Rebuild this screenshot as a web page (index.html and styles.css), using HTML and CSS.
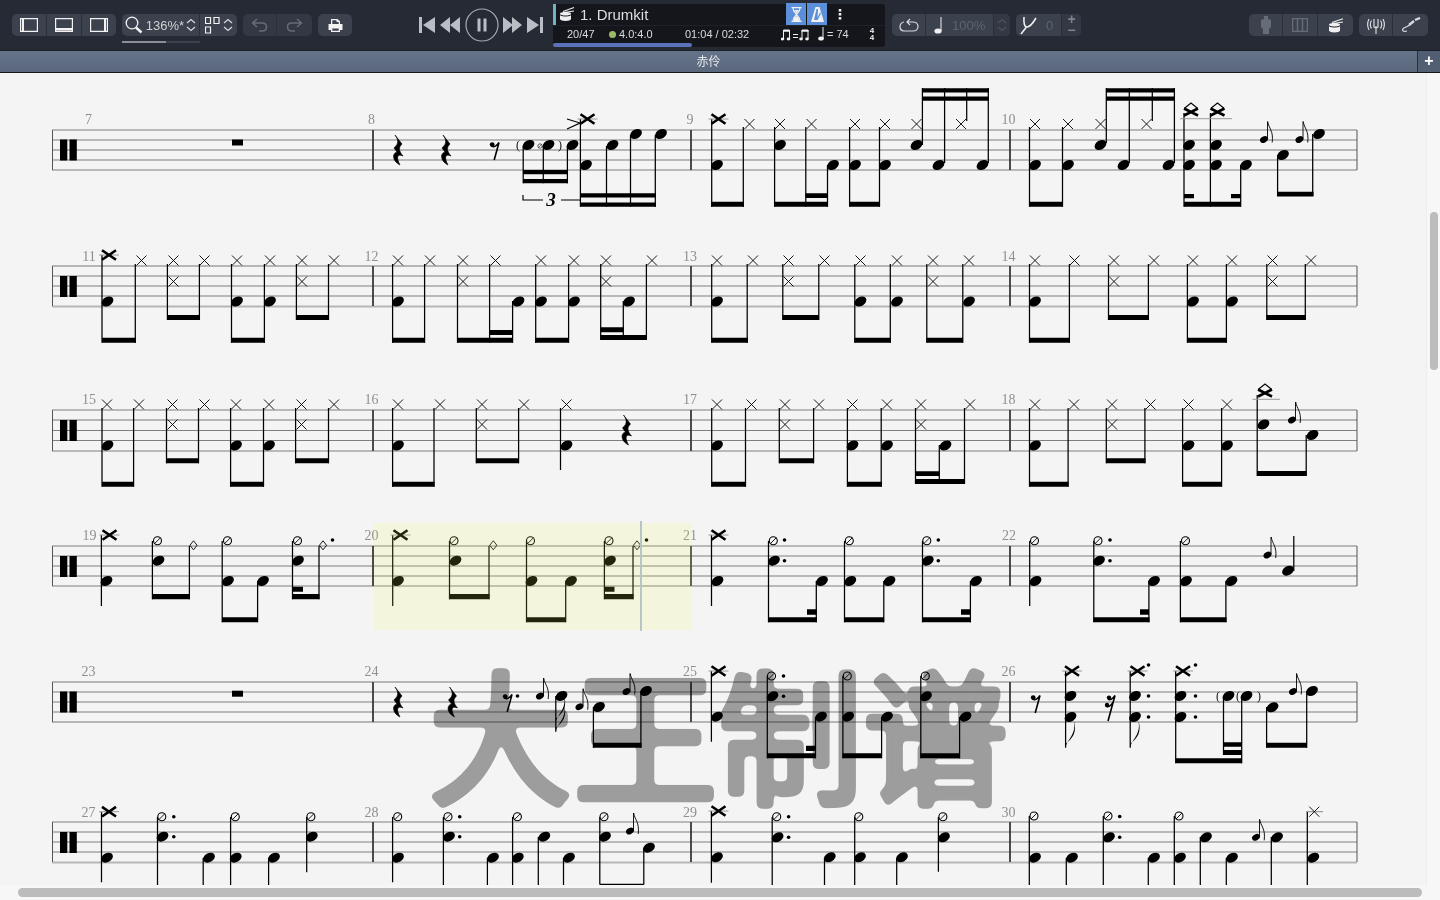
FILE: index.html
```html
<!DOCTYPE html>
<html lang="zh">
<head>
<meta charset="utf-8">
<title>Drumkit</title>
<link rel="stylesheet" href="styles.css">
</head>
<body>
<svg class="defs" width="0" height="0" aria-hidden="true">
  <defs>
    <ellipse id="n" rx="6.300" ry="4.500" transform="rotate(-30)"/>
    <path id="x" class="thin" d="M-5-5L5 5M5-5L-5 5"/>
    <g id="X"><path class="ledger" d="M-10 0H10"/><path class="bold" d="M-7-4.800L7 4.800M7-4.800L-7 4.800"/></g>
    <g id="XD"><path class="bold" d="M-7-3.500L7 3.500M7-3.500L-7 3.500"/><path class="thin thick" d="M-6.500-3.800L0-9L6.500-3.800"/></g>
    <g id="o"><circle class="thin thick" r="4"/><path class="thin" d="M-3 3L3-3"/></g>
    <path id="d" class="thin" d="M0-4.500L3.600 0L0 4.500L-3.600 0Z"/>
    <circle id="t" r="1.800"/>
    <g id="g"><ellipse rx="4.200" ry="3" transform="rotate(-28)"/><path class="thin" d="M3.500-1V-18"/><path class="thin" d="M3.700-18C4.700-11 9.700-9 8.200 3"/></g>
    <path id="r" class="fat" d="M-3-15L4-6C1-3 0 0 5 6C1 4-3 5 2 15C-6 11-6 3-1 2L-4-2C-1-5 2-8-3-15Z"/>
    <g id="e"><circle cx="-2.800" cy="-6.400" r="2.400"/><path class="rest" d="M-3.500-5C-1-3.500 2-5 4-8.500L-.8 9"/></g>
    <g id="ee"><circle cx="-1" cy="-9.400" r="2.200"/><circle cx="-3" cy="-2" r="2.200"/><path class="rest" d="M-2-8C0-6.500 3-8 5-11.500L-2 14M-4-.8C-2 .5 1-1 3-4.500"/></g>
    <path id="f" d="M0 0C1.500-9 11.500-13 8-28C12-16 7-9 0-4Z"/>
    <g id="clef"><rect x="60" width="7.300" height="21"/><rect x="69.500" width="7.300" height="21"/></g>
    <filter id="rnd" x="-5%" y="-5%" width="110%" height="110%"><feGaussianBlur stdDeviation="2.600"/><feComponentTransfer><feFuncA type="linear" slope="7" intercept="-2.700"/></feComponentTransfer></filter>
  </defs>
</svg>

<header class="toolbar">
  <div class="group g-view">
    <button class="seg w35"><svg class="ico" width="18" height="14" viewBox="0 0 18 14"><path d="M.6.6h16.800v12.800H.6z"/><path class="solid" d="M2 1h2v12H2z"/></svg></button>
    <button class="seg w35"><svg class="ico" width="18" height="14" viewBox="0 0 18 14"><path d="M.6.6h16.800v12.800H.6z"/><path class="solid" d="M1 10h16v2.500H1z"/></svg></button>
    <button class="seg w34 last"><svg class="ico" width="18" height="14" viewBox="0 0 18 14"><path d="M.6.6h16.800v12.800H.6z"/><path class="solid" d="M14 1h2v12h-2z"/></svg></button>
  </div>
  <div class="group g-zoom">
    <button class="seg zoom-seg">
      <svg class="ico thicker" width="18" height="18" viewBox="0 0 18 18"><circle cx="7" cy="7" r="5.800"/><path class="solidline" d="M11 11.500L16.500 16.500"/></svg>
      <span class="zoom-val">136%*</span>
      <svg class="chev" width="10" height="14" viewBox="0 0 10 14"><path d="M1 5L5 1.500L9 5M1 9L5 12.500L9 9"/></svg>
    </button>
    <button class="seg grid-seg last">
      <svg class="ico" width="15" height="17" viewBox="0 0 15 17"><path d="M.5 .5h5v6h-5zM9 .5h5v6H9zM.5 10h5v6h-5z"/></svg>
      <svg class="chev" width="10" height="14" viewBox="0 0 10 14"><path d="M1 5L5 1.500L9 5M1 9L5 12.500L9 9"/></svg>
    </button>
    <div class="zoom-slider"><span class="zoom-fill"></span></div>
  </div>
  <div class="group g-undo dim">
    <button class="seg w34"><svg class="ico-dim" width="17" height="14" viewBox="0 0 17 14"><path d="M6 1L1.500 5L6 9M2 5H11C14 5 15.500 7 15.500 9C15.500 11 14 13 11 13H8"/></svg></button>
    <button class="seg w35 last"><svg class="ico-dim" width="17" height="14" viewBox="0 0 17 14"><path d="M11 1L15.500 5L11 9M15 5H6C3 5 1.500 7 1.500 9C1.500 11 3 13 6 13H9"/></svg></button>
  </div>
  <div class="group g-print">
    <button class="seg w34 last"><svg width="15" height="15" viewBox="0 0 15 15" class="print"><path d="M3 6V1h6.500L12 3.300V6h2.500v6H12v2H3v-2H.5V6zM4.300 2.300V6h6.400V4H8.500V2.300zM4.300 10.500v2.300h6.400v-2.300z" fill-rule="evenodd"/></svg></button>
  </div>

  <div class="transport">
    <svg class="tp" width="16" height="16" viewBox="0 0 16 16"><path d="M0 0h3v16H0zM16 0v16L4 8z"/></svg>
    <svg class="tp" width="20" height="16" viewBox="0 0 20 16"><path d="M10 0v16L0 8zM20 0v16L10 8z"/></svg>
    <svg class="tp-circle" width="34" height="34" viewBox="0 0 34 34"><circle cx="17" cy="17" r="16"/><path class="tp-bar" d="M12.500 10.500h3v13h-3zM18.500 10.500h3v13h-3z"/></svg>
    <svg class="tp" width="19" height="16" viewBox="0 0 19 16"><path d="M0 0v16L10 8zM9 0v16L19 8z"/></svg>
    <svg class="tp" width="16" height="16" viewBox="0 0 16 16"><path d="M0 0v16L12 8zM13 0h3v16h-3z"/></svg>
  </div>

  <div class="panel">
    <div class="panel-top">
      <svg class="drum" width="16" height="16" viewBox="0 0 16 16"><path d="M1 7.500c0-2 11-2 11 0v5.500c0 2.500-11 2.500-11 0z"/><path class="gap" d="M1 8.500c1 2 10 2 11 0"/><path class="stick" d="M4 5.500L15 1.500M5 6.500L15 5"/></svg>
      <span class="track-name">1. Drumkit</span>
      <button class="blue-btn first"><svg width="11" height="15" viewBox="0 0 11 15" class="white-line-ico"><path d="M.5.7h10M.5 14.300h10M2 1C2 5 5 6 5.500 7.500C5 9 2 10 2 14M9 1C9 5 6 6 5.500 7.500C6 9 9 10 9 14"/><path class="fillin" d="M3 11.500L5.500 9L8 11.500V14H3zM3.300 3H7.700L5.500 6z"/></svg></button>
      <button class="blue-btn"><svg width="13" height="15" viewBox="0 0 13 15" class="white-ico"><path d="M4.500 0h4L13 15H0zM5.500 2L3 13h3.500L9.800 7 9.300 5 6.500 10.500 7 2z" fill-rule="evenodd"/></svg></button>
      <span class="kebab">⋮</span>
    </div>
    <div class="panel-bottom">
      <span class="p-bars">20/47</span>
      <span class="p-dot"></span>
      <span class="p-sig">4.0:4.0</span>
      <span class="p-time">01:04 / 02:32</span>
      <svg class="p-swing" width="30" height="13" viewBox="0 0 30 13"><path d="M2.500 11V2h6v9M21 11V2h6v9" class="wht-line"/><path d="M2 2h7v1.800H2zM20.500 2h7v1.800h-7z" class="white-ico"/><ellipse cx="1.500" cy="11" rx="1.800" ry="1.400" class="white-ico"/><ellipse cx="7.500" cy="11" rx="1.800" ry="1.400" class="white-ico"/><ellipse cx="20" cy="11" rx="1.800" ry="1.400" class="white-ico"/><ellipse cx="26" cy="11" rx="1.800" ry="1.400" class="white-ico"/><path d="M12 6h5v1h-5zM12 9h5v1h-5z" class="white-ico"/></svg>
      <svg class="p-note" width="7" height="14" viewBox="0 0 7 14"><path d="M5 12V0" class="wht-line"/><ellipse cx="3" cy="11.500" rx="2.800" ry="2" class="white-ico"/></svg>
      <span class="p-tempo">= 74</span>
      <span class="p-clef"><span>4</span><span>4</span></span>
    </div>
    <div class="progress"></div>
  </div>

  <div class="group g-loop">
    <button class="seg w34"><svg class="ico-soft" width="20" height="14" viewBox="0 0 20 14"><path d="M11 1L8 4L11 7M8.500 4H14C17 4 19 6 19 8.500S17 13 14 13H5C2.500 13 1 11 1 8.500S3 4 5 4"/></svg></button>
    <button class="seg speed-seg"><svg width="9" height="17" viewBox="0 0 9 17"><path d="M7 14V0" class="wht-line"/><ellipse cx="4" cy="14" rx="3.600" ry="2.600" class="white-ico"/></svg><span class="dim-val">100%</span></button>
    <button class="seg w16 last darker"><svg class="chev faint" width="10" height="14" viewBox="0 0 10 14"><path d="M1 5L5 1.500L9 5M1 9L5 12.500L9 9"/></svg></button>
  </div>
  <div class="group g-tune">
    <button class="seg tune-seg"><svg class="ico-soft fork" width="17" height="20" viewBox="0 0 17 20"><path d="M1 19L6.500 12"/><path d="M4 2C3.500 8 4.500 12 7 12C10 12 13 8 16 3"/></svg><span class="dim-val zero">0</span></button>
    <button class="seg w19 last pm">+<br>−</button>
  </div>
  <div class="group g-inst">
    <button class="seg w34"><svg class="ico-dim-solid" width="10" height="18" viewBox="0 0 10 18"><path d="M3 0h4v3l3 1v7l-2 2v5H2v-5L0 11V4l3-1z"/></svg></button>
    <button class="seg w35"><svg class="ico-dim" width="16" height="14" viewBox="0 0 16 14"><path d="M.5.5h15v13H.5zM5.500.5v13M10.500.5v13"/></svg></button>
    <button class="seg w35 last"><svg width="16" height="15" viewBox="0 0 16 15" class="white-ico"><path d="M1 6.500c0-2 11-2 11 0v6c0 2.500-11 2.500-11 0z"/><path class="gap" d="M1 7.500c1 2 10 2 11 0"/><path class="stick" d="M4 4.500L15 .8M5 5.500L15 4"/></svg></button>
  </div>
  <div class="group g-io">
    <button class="seg w34"><svg class="ico-soft thin-soft" width="20" height="18" viewBox="0 0 20 18"><path d="M3 3C1 7 1 10 3 14M5.500 4.500C4 7 4 10 5.500 12.500M17 3C19 7 19 10 17 14M14.500 4.500C16 7 16 10 14.500 12.500M8 3V11C8 12 12 12 12 11V3"/><path d="M10 10V18"/></svg></button>
    <button class="seg w35 last"><svg class="ico-soft thin-soft" width="20" height="16" viewBox="0 0 20 16"><path d="M9 8L3 11C0 13 2 15 6 14"/><path class="stick-thick" d="M8 8L13 4M14 3L19 1"/></svg></button>
  </div>
</header>

<div class="titlebar">
  <div class="title">赤伶</div>
  <div class="add">+</div>
</div>

<div class="main">
  <main class="score">
    <svg class="system s1" viewBox="0 80 1426 136">
      <path class="line" d="M52 130H1357M52 140H1357M52 160H1357M52 170H1357"/><path class="line soft" d="M52 150H1357"/>
      <path class="frame" d="M52.500 130V170M1357 130V170"/><path class="bar" d="M373 130V170M691 130V170M1010 130V170"/>
      <use href="#clef" y="139.500"/>
      <text class="num" x="88.500" y="124">7</text><text class="num" x="371.500" y="124">8</text><text class="num" x="690" y="124">9</text><text class="num" x="1008.500" y="124">10</text>
      <path d="M232 139.500H243V145.500H232Z"/>
      <use href="#r" x="398" y="150"/><use href="#r" x="446" y="150"/><use href="#e" x="495" y="151"/>
      <text class="par" x="516" y="149">(</text><text class="par" x="558" y="149">)</text><use href="#o" transform="translate(540 146) scale(.55)"/>
      <path class="stem" d="M523.200 146V183.300M543.300 146V183.300M567.400 146V183.300M580.400 119V206.700M606.500 146V206.700M630.500 135V206.700M655.300 135V206.700M711.700 119V206.700M743.300 127V206.700M774.600 127V206.700M805.800 127V206.700M827.500 165V206.700M849.600 127V206.700M879.500 127V206.700M922.400 88V145M944.600 88V163M966.700 88V121M988.300 88V163M1029.500 127V206.700M1062.500 127V206.700M1106.300 88V143M1129.300 88V163M1152.300 88V121M1174.400 88V163M1184 113V206.700M1210.400 113V206.700M1240.700 165V206.700M1277.600 155V196M1312.700 134V196"/>
      <path d="M523 170H568V174.300H523ZM523 179H568V183.300H523ZM580 193.300H656V197.500H580ZM580 202.500H656V206.700H580ZM711 201.700H744V206.700H711ZM774 201.700H828V206.700H774ZM805.500 193.300H828V198H805.500ZM849 201.700H880V206.700H849ZM922 88.300H989V92.500H922ZM922 96.500H989V100.700H922ZM1029 201.700H1063V206.700H1029ZM1106 88.300H1175V92.500H1106ZM1106 96.500H1175V100.700H1106ZM1184 201.700H1241V206.700H1184ZM1184 194H1194V198.300H1184ZM1231 194H1241V198.300H1231ZM1277 191.700H1313.500V196.500H1277Z"/>
      <path class="brk" d="M523 195V200H543M561 200H580"/><text class="tup" x="551" y="206">3</text>
      <path class="brk" d="M567 119L580 123L567 129"/>
      <use href="#n" x="528.500" y="145"/><use href="#n" x="548.500" y="145"/><use href="#n" x="572.500" y="145"/><use href="#n" x="586" y="165"/><use href="#n" x="612.500" y="145"/><use href="#n" x="636" y="134"/><use href="#n" x="661" y="134"/>
      <use href="#X" x="587.500" y="119"/>
      <use href="#X" x="718.500" y="119"/><use href="#n" x="717" y="165"/><use href="#x" x="749.500" y="124"/><use href="#x" x="780" y="124"/><use href="#n" x="780" y="145"/><use href="#x" x="811.500" y="124"/><use href="#n" x="833" y="165"/><use href="#x" x="855" y="124"/><use href="#n" x="855" y="165"/><use href="#x" x="885" y="124"/><use href="#n" x="885" y="165"/><use href="#x" x="916.500" y="124"/><use href="#n" x="916.500" y="145"/><use href="#n" x="938.500" y="165"/><use href="#x" x="961" y="124"/><use href="#n" x="982.500" y="165"/>
      <use href="#x" x="1035" y="124"/><use href="#n" x="1035" y="165"/><use href="#x" x="1068" y="124"/><use href="#n" x="1068" y="165"/><use href="#x" x="1100.500" y="124"/><use href="#n" x="1100.500" y="145"/><use href="#n" x="1123.500" y="165"/><use href="#x" x="1146.500" y="124"/><use href="#n" x="1168.500" y="165"/>
      <path class="ledger" d="M1180 118.700H1232"/><use href="#XD" x="1191" y="112"/><use href="#XD" x="1217.500" y="112"/>
      <use href="#n" x="1189" y="145"/><use href="#n" x="1216" y="145"/><use href="#n" x="1189" y="165"/><use href="#n" x="1216" y="165"/><use href="#n" x="1246" y="165"/>
      <use href="#g" x="1264" y="139.500"/><use href="#g" x="1299.500" y="139.500"/><use href="#n" x="1283" y="155"/><use href="#n" x="1319" y="134"/>
    </svg>

    <svg class="system s2" viewBox="0 216 1426 144">
      <path class="line" d="M52 276H1357M52 286H1357M52 296H1357"/><path class="line soft" d="M52 266H1357M52 306.500H1357"/>
      <path class="frame" d="M52.500 266V306M1357 266V306"/><path class="bar" d="M373 266V306M691 266V306M1010 266V306"/>
      <use href="#clef" y="276"/>
      <text class="num" x="89" y="261">11</text><text class="num" x="371.500" y="261">12</text><text class="num" x="690" y="261">13</text><text class="num" x="1008.500" y="261">14</text>
      <path class="stem" d="M102 255V342.700M135.300 264V342.700M167.400 264V320M199.400 264V320M231.500 264V342.700M264.400 264V342.700M296.400 264V320M328.500 264V320M392.600 264V342.700M424.600 264V342.700M457.500 264V342.700M489.600 264V342.700M512.600 301V342.700M535.700 264V342.700M568.600 264V342.700M600.700 264V340M623.300 301V340M646.400 264V340M711.700 264V342.700M747.200 264V342.700M782.800 264V320M818.800 264V320M854.800 264V342.700M890.300 264V342.700M926.800 264V342.700M962.800 264V342.700M1029.500 264V342.700M1069.400 264V342.700M1108.500 264V320M1148.400 264V320M1187.400 264V342.700M1226.400 264V342.700M1266.800 264V320M1305.300 264V320"/>
      <path d="M102 337.700H136V342.700H102ZM167 315H200V320H167ZM231 337.700H265V342.700H231ZM296 315H329V320H296ZM392 337.700H425V342.700H392ZM457 337.700H513V342.700H457ZM489.500 330H513V335H489.500ZM535 337.700H569V342.700H535ZM600.500 335H647V340H600.500ZM600.500 327.300H623.500V332.300H600.500ZM711.500 337.700H748V342.700H711.500ZM782.500 315H819V320H782.500ZM854.500 337.700H891V342.700H854.500ZM926.500 337.700H963V342.700H926.500ZM1029 337.700H1070V342.700H1029ZM1108 315H1149V320H1108ZM1187 337.700H1227V342.700H1187ZM1266.500 315H1306V320H1266.500Z"/>
      <use href="#X" x="109" y="255"/><use href="#n" x="107.500" y="301.500"/><use href="#x" x="141.500" y="260.500"/><use href="#x" x="173.500" y="260.500"/><use href="#x" x="173.500" y="281.500"/><use href="#x" x="204.500" y="260.500"/><use href="#x" x="237" y="260.500"/><use href="#n" x="237" y="301.500"/><use href="#x" x="270" y="260.500"/><use href="#n" x="270" y="301.500"/><use href="#x" x="302" y="260.500"/><use href="#x" x="302" y="281.500"/><use href="#x" x="334" y="260.500"/>
      <use href="#x" x="398" y="260.500"/><use href="#n" x="398" y="301.500"/><use href="#x" x="430" y="260.500"/><use href="#x" x="463" y="260.500"/><use href="#x" x="463" y="281.500"/><use href="#x" x="495.500" y="260.500"/><use href="#n" x="518.500" y="301.500"/><use href="#x" x="541" y="260.500"/><use href="#n" x="541" y="301.500"/><use href="#x" x="574" y="260.500"/><use href="#n" x="574" y="301.500"/><use href="#x" x="606" y="260.500"/><use href="#x" x="606" y="281.500"/><use href="#n" x="629" y="301.500"/><use href="#x" x="652" y="260.500"/>
      <use href="#x" x="717" y="260.500"/><use href="#n" x="717" y="301.500"/><use href="#x" x="753" y="260.500"/><use href="#x" x="788.500" y="260.500"/><use href="#x" x="788.500" y="281.500"/><use href="#x" x="824.500" y="260.500"/><use href="#x" x="860.500" y="260.500"/><use href="#n" x="860.500" y="301.500"/><use href="#x" x="897" y="260.500"/><use href="#n" x="897" y="301.500"/><use href="#x" x="933" y="260.500"/><use href="#x" x="933" y="281.500"/><use href="#x" x="969" y="260.500"/><use href="#n" x="969" y="301.500"/>
      <use href="#x" x="1035" y="260.500"/><use href="#n" x="1035" y="301.500"/><use href="#x" x="1074.500" y="260.500"/><use href="#x" x="1114" y="260.500"/><use href="#x" x="1114" y="281.500"/><use href="#x" x="1154" y="260.500"/><use href="#x" x="1193" y="260.500"/><use href="#n" x="1193" y="301.500"/><use href="#x" x="1232" y="260.500"/><use href="#n" x="1232" y="301.500"/><use href="#x" x="1272.500" y="260.500"/><use href="#x" x="1272.500" y="281.500"/><use href="#x" x="1311" y="260.500"/>
    </svg>

    <svg class="system s3" viewBox="0 360 1426 136">
      <path class="line" d="M52 410H1357M52 430.500H1357M52 440.500H1357M52 451H1357"/><path class="line soft" d="M52 420H1357"/>
      <path class="frame" d="M52.500 410V451M1357 410V451"/><path class="bar" d="M373 410V451M691 410V451M1010 410V451"/>
      <use href="#clef" y="420"/>
      <text class="num" x="89" y="404">15</text><text class="num" x="371.500" y="404">16</text><text class="num" x="690" y="404">17</text><text class="num" x="1008.500" y="404">18</text>
      <path class="stem" d="M102 408V486.700M133.600 408V486.700M166.500 408V463.300M198.500 408V463.300M230.600 408V486.700M263.500 408V486.700M295.600 408V463.300M328.500 408V463.300M392.600 408V486.700M434 408V486.700M476.300 408V463.300M518.600 408V463.300M560.500 408V470M711.700 408V486.700M745.500 408V486.700M779.300 408V463.300M813.600 408V463.300M847.400 408V486.700M881.200 408V486.700M915.500 408V484M939.300 445V484M964.500 408V484M1029.500 408V486.700M1068.100 408V486.700M1106.300 408V463.300M1144.900 408V463.300M1182.600 408V486.700M1221.600 408V486.700M1257.200 395V476M1306.200 435V476"/>
      <path d="M102 481.700H134V486.700H102ZM166 458.300H199V463.300H166ZM230 481.700H264V486.700H230ZM295 458.300H329V463.300H295ZM392 481.700H434.500V486.700H392ZM476 458.300H519V463.300H476ZM711.500 481.700H746V486.700H711.500ZM779 458.300H814V463.300H779ZM847 481.700H882V486.700H847ZM915 479H965V484H915ZM915 471.300H939.500V476H915ZM1029 481.700H1068.500V486.700H1029ZM1106 458.300H1145.500V463.300H1106ZM1182 481.700H1222V486.700H1182ZM1257 471H1306.500V476H1257Z"/>
      <use href="#r" x="626.500" y="430"/>
      <use href="#x" x="107" y="404.500"/><use href="#n" x="107.500" y="445.500"/><use href="#x" x="139" y="404.500"/><use href="#x" x="172.500" y="404.500"/><use href="#x" x="172.500" y="424.500"/><use href="#x" x="204.500" y="404.500"/><use href="#x" x="236" y="404.500"/><use href="#n" x="236" y="445.500"/><use href="#x" x="269" y="404.500"/><use href="#n" x="269" y="445.500"/><use href="#x" x="301.500" y="404.500"/><use href="#x" x="301.500" y="424.500"/><use href="#x" x="334" y="404.500"/>
      <use href="#x" x="398" y="404.500"/><use href="#n" x="398" y="445.500"/><use href="#x" x="440" y="404.500"/><use href="#x" x="482" y="404.500"/><use href="#x" x="482" y="424.500"/><use href="#x" x="524" y="404.500"/><use href="#x" x="566.500" y="404.500"/><use href="#n" x="566.500" y="445.500"/>
      <use href="#x" x="717" y="404.500"/><use href="#n" x="717" y="445.500"/><use href="#x" x="751.500" y="404.500"/><use href="#x" x="785" y="404.500"/><use href="#x" x="785" y="424.500"/><use href="#x" x="819" y="404.500"/><use href="#x" x="852.500" y="404.500"/><use href="#n" x="852.500" y="445.500"/><use href="#x" x="887" y="404.500"/><use href="#n" x="887" y="445.500"/><use href="#x" x="921" y="404.500"/><use href="#x" x="921" y="424.500"/><use href="#n" x="945.500" y="445.500"/><use href="#x" x="970" y="404.500"/>
      <use href="#x" x="1035" y="404.500"/><use href="#n" x="1035" y="445.500"/><use href="#x" x="1074" y="404.500"/><use href="#x" x="1112" y="404.500"/><use href="#x" x="1112" y="424.500"/><use href="#x" x="1150.500" y="404.500"/><use href="#x" x="1188.500" y="404.500"/><use href="#n" x="1188.500" y="445.500"/><use href="#x" x="1227" y="404.500"/><use href="#n" x="1227" y="445.500"/>
      <path class="ledger" d="M1252.500 399.300H1280"/><use href="#XD" x="1265" y="393"/><use href="#n" x="1263.500" y="424.500"/><use href="#g" x="1292" y="420"/><use href="#n" x="1312.500" y="435"/>
    </svg>

    <svg class="system s4" viewBox="0 496 1426 136">
      <path class="line" d="M52 546H1357M52 556H1357M52 566H1357M52 576H1357M52 586H1357"/>
      <path class="frame" d="M52.500 546V586M1357 546V586"/><path class="bar" d="M373 546V586M691 546V586M1010 546V586"/>
      <use href="#clef" y="556"/>
      <text class="num" x="89.500" y="540">19</text><text class="num" x="371.500" y="540">20</text><text class="num" x="690" y="540">21</text><text class="num" x="1009" y="540">22</text>
      <path class="stem" d="M101.400 535V606M152.400 541V599.300M189.400 546V599.300M222.200 541V622.300M257.600 581V622.300M292.500 541V599.300M319 546V599.300M392.700 535V606M449.500 541V599.300M489 546V599.300M526.500 541V622.300M565.700 581V622.300M604.400 541V599.300M633 546V599.300M711.500 535V606M768.500 541V622.300M816.300 581V622.300M844.500 541V622.300M883.800 581V622.300M922.500 541V622.300M970.400 581V622.300M1029.700 541V606M1093.800 541V622.300M1148.900 581V622.300M1180.400 541V622.300M1225.900 581V622.300M1293.800 536V571"/>
      <path d="M152 594H190V599.300H152ZM222 617.300H258V622.300H222ZM292 594H319.500V599.300H292ZM292 586.700H303V591.700H292ZM449 594H489.500V599.300H449ZM526 617.300H566V622.300H526ZM604 594H633.500V599.300H604ZM604 586.700H614.500V591.700H604ZM768 617.300H817V622.300H768ZM807 609.300H816.500V614.700H807ZM844 617.300H884V622.300H844ZM922 617.300H971V622.300H922ZM961 609.300H970.500V614.700H961ZM1093.500 617.300H1149.500V622.300H1093.500ZM1140 609.300H1149V614.700H1140ZM1180 617.300H1226.500V622.300H1180Z"/>
      <use href="#X" x="109.500" y="535"/><use href="#n" x="106.500" y="581"/><use href="#o" x="157.500" y="540.700"/><use href="#n" x="158.500" y="560.700"/><use href="#d" x="193.500" y="545.300"/><use href="#o" x="227.500" y="540.700"/><use href="#n" x="228" y="581"/><use href="#n" x="263" y="581"/><use href="#o" x="297.500" y="540.700"/><use href="#n" x="298" y="560.700"/><use href="#d" x="323" y="545.300"/><use href="#t" x="332.500" y="540"/>
      <use href="#X" x="400.500" y="535"/><use href="#n" x="398" y="581"/><use href="#o" x="454" y="540.700"/><use href="#n" x="455.500" y="560.700"/><use href="#d" x="493.300" y="545.300"/><use href="#o" x="530.500" y="540.700"/><use href="#n" x="531.500" y="581"/><use href="#n" x="571" y="581"/><use href="#o" x="609" y="540.700"/><use href="#n" x="610" y="560.700"/><use href="#d" x="637" y="545.300"/><use href="#t" x="646.500" y="540"/>
      <use href="#X" x="718.500" y="535"/><use href="#n" x="717.500" y="581"/><use href="#o" x="773.300" y="540.700"/><use href="#t" x="784.500" y="540"/><use href="#n" x="774" y="560.700"/><use href="#t" x="784.500" y="560.700"/><use href="#n" x="822" y="581"/><use href="#o" x="849.300" y="540.700"/><use href="#n" x="850.300" y="581"/><use href="#n" x="889.500" y="581"/><use href="#o" x="926.800" y="540.700"/><use href="#t" x="938.300" y="540"/><use href="#n" x="927.800" y="560.700"/><use href="#t" x="938.300" y="560.700"/><use href="#n" x="976" y="581"/>
      <use href="#o" x="1034.500" y="540.700"/><use href="#n" x="1035.500" y="581"/><use href="#o" x="1098" y="540.700"/><use href="#t" x="1110" y="540"/><use href="#n" x="1099" y="560.700"/><use href="#t" x="1110" y="560.700"/><use href="#n" x="1154" y="581"/><use href="#o" x="1185.500" y="540.700"/><use href="#n" x="1186" y="581"/><use href="#n" x="1231.500" y="581"/><use href="#g" x="1267.500" y="555"/><use href="#n" x="1288" y="570.700"/>
    </svg>

    <svg class="system s5" viewBox="0 632 1426 141">
      <path class="line" d="M52 692H1357M52 702H1357M52 712H1357"/><path class="line soft" d="M52 682H1357M52 722H1357"/>
      <path class="frame" d="M52.500 682V722M1357 682V722"/><path class="bar" d="M373 682V722M691 682V722M1010 682V722"/>
      <use href="#clef" y="691.500"/>
      <text class="num" x="88.500" y="676">23</text><text class="num" x="371.500" y="676">24</text><text class="num" x="690" y="676">25</text><text class="num" x="1008.500" y="676">26</text>
      <path d="M232 690.700H243V696.700H232Z"/>
      <use href="#r" x="398" y="702"/><use href="#r" x="452.500" y="702"/><use href="#e" x="508" y="703"/><use href="#t" x="517.500" y="696"/>
      <path class="stem" d="M555.800 696V731.700M593.400 707V747.700M640.900 691V747.700M711.400 671V741.700M767.300 676V758.300M815.500 717V758.300M842.900 676V758.300M881.600 717V758.300M920.800 676V758.300M959.600 717V758.300M1065.600 671V747.700M1130.200 671V747.700M1175.700 671V763.300M1223.500 696V755M1241.700 696V763.300M1266.600 707V747.700M1306.700 691V747.700"/>
      <use href="#f" x="555.800" y="731.700"/><use href="#f" x="555.800" y="722.500"/><use href="#f" x="1065.600" y="747.700"/><use href="#f" x="1130.200" y="747.700"/>
      <path d="M593 742.700H641.500V747.700H593ZM767 753.300H816V758.300H767ZM806 745.700H815.500V751H806ZM842.500 753.300H882V758.300H842.500ZM920.500 753.300H960V758.300H920.500ZM1175.500 758.300H1242V763.300H1175.500ZM1223 742.300H1242V746.700H1223ZM1223 750H1242V755H1223ZM1266 742.700H1307V747.700H1266Z"/>
      <use href="#g" x="540" y="696"/><use href="#n" x="561.500" y="696"/><use href="#g" x="579.500" y="706.700"/><use href="#n" x="599" y="707"/><use href="#g" x="626.500" y="691.500"/><use href="#n" x="646" y="691"/>
      <use href="#X" x="718.500" y="671"/><use href="#n" x="717" y="716.700"/><use href="#o" x="771.500" y="676"/><use href="#t" x="783.500" y="676"/><use href="#n" x="772.500" y="696.300"/><use href="#t" x="783.500" y="696.300"/><use href="#n" x="821" y="716.700"/><use href="#o" x="847.300" y="676"/><use href="#n" x="848.200" y="716.700"/><use href="#n" x="887" y="716.700"/><use href="#o" x="925.300" y="676"/><use href="#n" x="926" y="696.300"/><use href="#n" x="965.500" y="716.700"/>
      <use href="#e" x="1036" y="704"/><use href="#ee" x="1110" y="707"/>
      <use href="#X" x="1072" y="671"/><use href="#n" x="1070.500" y="696"/><use href="#n" x="1070.500" y="717"/><use href="#X" x="1137.500" y="671"/><use href="#t" x="1148.500" y="665"/><use href="#n" x="1135" y="696"/><use href="#t" x="1148.500" y="696"/><use href="#n" x="1135" y="717"/><use href="#t" x="1148.500" y="717"/><use href="#X" x="1183" y="671"/><use href="#t" x="1195.500" y="665"/><use href="#n" x="1180.500" y="696"/><use href="#t" x="1195.500" y="696"/><use href="#n" x="1180.500" y="717"/><use href="#t" x="1195.500" y="717"/>
      <text class="par" x="1216" y="700">(</text><text class="par" x="1236" y="700">(</text><text class="par" x="1257" y="700">)</text>
      <use href="#n" x="1228.500" y="696"/><use href="#n" x="1246.500" y="696"/><use href="#g" x="1293" y="691.500"/><use href="#n" x="1272.500" y="707.300"/><use href="#n" x="1312" y="691"/>
    </svg>

    <svg class="system s6" viewBox="0 773 1426 112">
      <path class="line" d="M52 822H1357M52 832H1357M52 842H1357M52 852H1357"/><path class="line soft" d="M52 862.500H1357"/>
      <path class="frame" d="M52.500 822V862M1357 822V862"/><path class="bar" d="M373 822V862M691 822V862M1010 822V862"/>
      <use href="#clef" y="832"/>
      <text class="num" x="88.500" y="817">27</text><text class="num" x="371.500" y="817">28</text><text class="num" x="690" y="817">29</text><text class="num" x="1008.500" y="817">30</text>
      <path class="stem" d="M101.500 812V882.300M157.500 817V885M203.200 858V885M230.600 817V885M268.600 858V885M306.700 817V872.300M392.600 817V882.300M443.400 817V885M487.400 858V885M512.600 817V885M538.300 837V885M563.500 858V885M599.800 817V884.500M643.800 848V884.500M711.400 811V882.700M772.200 817V885M824.500 858V885M854.700 817V885M896.700 858V885M938.400 817V871.700M1029.300 816V885M1066.300 858V885M1103.300 816V885M1148.300 858V885M1174.300 816V885M1200.300 837V885M1226.300 858V885M1271.300 837V885M1307.300 812V885"/>
      <path class="brk" d="M599.800 884.300H643.800"/>
      <use href="#X" x="109" y="811.700"/><use href="#n" x="107" y="857.700"/><use href="#o" x="161.800" y="816.700"/><use href="#t" x="173.800" y="816.700"/><use href="#n" x="162.500" y="836.700"/><use href="#t" x="173.800" y="836.700"/><use href="#n" x="209" y="857.700"/><use href="#o" x="235.300" y="816.700"/><use href="#n" x="235.700" y="857.700"/><use href="#n" x="274" y="857.700"/><use href="#o" x="310.900" y="816.700"/><use href="#n" x="311.800" y="836.700"/>
      <use href="#o" x="397.700" y="816.700"/><use href="#n" x="398" y="857.700"/><use href="#o" x="448" y="816.700"/><use href="#t" x="459.700" y="816.700"/><use href="#n" x="449" y="836.700"/><use href="#t" x="459.700" y="836.700"/><use href="#n" x="493" y="857.700"/><use href="#o" x="517.400" y="816.700"/><use href="#n" x="517.800" y="857.700"/><use href="#n" x="544.300" y="836.700"/><use href="#n" x="569" y="857.700"/><use href="#o" x="604" y="816.700"/><use href="#n" x="605" y="836.700"/><use href="#g" x="630" y="831"/><use href="#n" x="649" y="847.700"/>
      <use href="#X" x="718.500" y="811"/><use href="#n" x="717" y="857.300"/><use href="#o" x="776.700" y="816.700"/><use href="#t" x="788.600" y="816.700"/><use href="#n" x="777.600" y="837.300"/><use href="#t" x="788.600" y="837.300"/><use href="#n" x="829.800" y="857.300"/><use href="#o" x="858.800" y="816.700"/><use href="#n" x="860" y="857.300"/><use href="#n" x="902" y="857.300"/><use href="#o" x="942.900" y="816.700"/><use href="#n" x="944" y="837.300"/>
      <use href="#o" x="1034" y="816"/><use href="#n" x="1035" y="857.700"/><use href="#n" x="1072" y="857.700"/><use href="#o" x="1108" y="816"/><use href="#t" x="1119.700" y="816.500"/><use href="#n" x="1109" y="837.300"/><use href="#t" x="1119.700" y="837.300"/><use href="#n" x="1154" y="857.700"/><use href="#o" x="1179" y="816"/><use href="#n" x="1180" y="857.700"/><use href="#n" x="1206" y="837.300"/><use href="#n" x="1232" y="857.700"/><use href="#g" x="1256" y="837.300"/><use href="#n" x="1277" y="837.300"/>
      <path class="ledger dark" d="M1306 811.700H1323"/><use href="#x" x="1314.300" y="811.700"/><use href="#n" x="1313.300" y="857.700"/>
    </svg>

    <div class="highlight"></div>
    <div class="cursor"></div>
    <svg class="watermark" width="600" height="170" viewBox="0 0 600 170"><text x="0" y="129" filter="url(#rnd)">大王制谱</text></svg>
  </main>
  <aside class="vtrack"><div class="vthumb"></div></aside>
</div>
<div class="htrack"><div class="hthumb"></div></div>
</body>
</html>
```

FILE: styles.css
```css
* { box-sizing: border-box; }
html, body { margin: 0; height: 100%; overflow: hidden; }
body { background: #f7f7f7; font-family: "Liberation Sans", Arial, sans-serif; display: flex; flex-direction: column; height: 900px; }
button { border: 0; padding: 0; margin: 0; background: none; font: inherit; color: inherit; }
.defs { position: absolute; }

/* toolbar */
.toolbar { height: 50px; flex: none; background: #262a35; display: flex; align-items: center; padding-left: 12px; }
.group { height: 22px; display: flex; border-radius: 5px; background: #3b414d; position: relative; flex: none; }
.seg { height: 22px; display: flex; align-items: center; justify-content: center; border-right: 1px solid #2b2f3a; flex: none; }
.seg.last { border-right: 0; }
.w34 { width: 34px; } .w35 { width: 35px; } .w16 { width: 16px; } .w19 { width: 19px; }
.g-zoom { margin-left: 6px; }
.g-undo { margin-left: 6px; background: #333844; }
.g-print { margin-left: 6px; }
.ico { fill: none; stroke: #f2f2f2; stroke-width: 1.2; }
.ico .solid { fill: #f2f2f2; stroke: none; }
.ico .solidline { stroke-width: 2.4; }
.ico.thicker { stroke-width: 1.3; }
.ico-dim { fill: none; stroke: #666c78; stroke-width: 1.5; }
.ico-dim-solid { fill: #666c78; }
.ico-soft { fill: none; stroke: #d8dade; stroke-width: 1.2; }
.fork { stroke-width: 1.6; stroke: #eceef0; }
.chev { fill: none; stroke: #d8dade; stroke-width: 1.2; }
.chev.faint { stroke: #4e5460; }
.print { fill: #f2f2f2; }
.zoom-seg { width: 78px; padding-left: 0; }
.zoom-val { font-size: 13px; color: #cfd1d5; margin: 0 2px 0 3px; }
.grid-seg { width: 37px; gap: 3px; }
.zoom-slider { position: absolute; left: 0; top: 27px; width: 78px; height: 2px; background: #3b414d; }
.zoom-fill { display: block; width: 44px; height: 2px; background: #8b8e94; }

.transport { margin-left: 67px; width: 124px; display: flex; align-items: center; justify-content: space-between; flex: none; }
.tp { fill: #b9bdc4; }
.tp-circle { fill: none; stroke: #a6aab1; stroke-width: 1.2; }
.tp-bar { fill: #b9bdc4; stroke: none; }

.panel { margin-left: 10px; width: 332px; height: 43px; background: #14161c; border-radius: 3px; position: relative; flex: none; }
.panel::before { content: ""; position: absolute; left: 0; top: 0; width: 3px; height: 21px; background: #6fb4bf; }
.panel-top { height: 22px; display: flex; align-items: center; border-bottom: 1px solid #1f222a; }
.drum { margin-left: 6px; fill: #eee; }
.gap { fill: none; stroke: #14161c; stroke-width: 1; }
.white-ico { fill: #f0f0f0; }
.white-line-ico { fill: none; stroke: #f0f0f0; stroke-width: 1.2; }
.fillin { fill: #f0f0f0; stroke: none; }
.stick { stroke: #f0f0f0; stroke-width: 1.2; fill: none; }
.stick-thick { stroke: #d8dade; stroke-width: 2.4; fill: none; }
.wht-line { stroke: #f0f0f0; stroke-width: 1; fill: none; }
.track-name { margin-left: 5px; font-size: 15px; color: #dddfe2; }
.blue-btn { width: 20px; height: 22px; background: #5c8fd9; display: flex; align-items: center; justify-content: center; margin-left: 1px; }
.blue-btn.first { margin-left: auto; }
.kebab { width: 6px; margin: 0 46px 0 6px; color: #eee; font-size: 14px; font-weight: bold; line-height: 1; text-align: center; font-family: "DejaVu Sans", sans-serif; }
.panel-bottom { height: 17px; display: flex; align-items: center; font-size: 11px; color: #d9dbde; }
.p-bars { margin-left: 14px; width: 27px; flex: none; }
.p-dot { margin-left: 15px; width: 7px; height: 7px; border-radius: 50%; background: #9cba62; flex: none; }
.p-sig { margin-left: 3px; width: 34px; flex: none; }
.p-time { margin-left: 32px; width: 64px; flex: none; white-space: nowrap; }
.p-swing { margin-left: 32px; flex: none; }
.p-note { margin-left: 7px; flex: none; }
.p-tempo { margin-left: 2px; width: 24px; flex: none; white-space: nowrap; }
.p-clef { margin-left: 17px; width: 8px; flex: none; display: flex; flex-direction: column; align-items: center; font-size: 8px; line-height: 7px; font-weight: bold; color: #f0f0f0; }
.progress { position: absolute; left: 0; bottom: 0; width: 139px; height: 4px; background: #5a72ba; border-radius: 2px; }

.g-loop { margin-left: 7px; }
.speed-seg { width: 68px; justify-content: flex-start; padding-left: 8px; }
.dim-val { font-size: 13px; color: #5e6572; margin-left: 9px; }
.dim-val.zero { margin-left: 9px; }
.darker { background: #333844; border-radius: 0 5px 5px 0; }
.g-tune { margin-left: 6px; }
.tune-seg { width: 46px; justify-content: flex-start; padding-left: 4px; }
.pm { display: block; background: #333844; border-radius: 0 5px 5px 0; color: #7e848e; font-size: 14px; line-height: 11px; text-align: center; font-weight: bold; }
.g-inst { margin-left: 168px; }
.g-io { margin-left: 6px; }

/* title bar */
.titlebar { height: 23px; flex: none; display: flex; background: linear-gradient(#66748a, #5a677d); border-top: 1px solid #1b1e26; border-bottom: 1px solid #14161b; }
.title { flex: 1; text-align: center; color: #e4e6ea; font: 12px/19px "Noto Sans CJK SC", "Liberation Sans", sans-serif; }
.add { width: 23px; border-left: 1px solid #2b3040; color: #fff; font: bold 16px/20px "Liberation Sans", sans-serif; text-align: center; background: #525e72; }

/* score */
.main { flex: none; height: 812px; display: flex; }
.score { width: 1426px; background: #f4f4f4; padding-top: 7px; position: relative; overflow: hidden; }
.system { display: block; width: 1426px; }
.s1, .s3, .s4 { height: 136px; }
.s2 { height: 144px; }
.s5 { height: 141px; }
.s6 { height: 112px; }
.line { stroke: #7f7f7f; stroke-width: 1; fill: none; }
.line.soft { stroke: #b6b6b6; stroke-width: 2; }
.frame { stroke: #555; stroke-width: 1; fill: none; }
.bar { stroke: #3a3a3a; stroke-width: 1.8; fill: none; }
.stem { stroke: #000; stroke-width: 1.25; fill: none; }
.brk { stroke: #000; stroke-width: 1.2; fill: none; }
.thin { stroke: #000; stroke-width: .9; fill: none; }
.thin.thick { stroke-width: 1.1; }
.bold { stroke: #000; stroke-width: 2.6; fill: none; }
.ledger { stroke: #9a9a9a; stroke-width: 1; fill: none; }
.ledger.dark { stroke: #888; }
.rest { stroke: #000; stroke-width: 1.6; fill: none; }
.fat { stroke: #000; stroke-width: .6; stroke-linejoin: round; }
.num { font: 14px "Liberation Serif", serif; fill: #8f8f8f; text-anchor: middle; }
.par { font: 12px "Liberation Serif", serif; fill: #111; }
.tup { font: italic bold 19px "Liberation Serif", serif; fill: #000; text-anchor: middle; }
.highlight { position: absolute; left: 374px; top: 450px; width: 318px; height: 107px; background: rgba(238, 255, 80, .14); }
.cursor { position: absolute; left: 640px; top: 448px; width: 2px; height: 110px; background: #b4c6c8; }
.watermark { position: absolute; left: 428px; top: 592px; overflow: visible; mix-blend-mode: multiply; pointer-events: none; }
.watermark text { font: 400 145px "Noto Sans CJK SC", sans-serif; fill: #a4a4a4; stroke: #a4a4a4; stroke-width: 6px; stroke-linejoin: round; stroke-linecap: round; }

/* scrollbars */
.vtrack { width: 14px; background: #f7f7f7; border-left: 1px solid #ededed; padding: 139px 3px 0 3px; }
.vthumb { width: 8px; height: 158px; border-radius: 4px; background: #bcbcbc; }
.htrack { height: 15px; padding: 3px 18px 0; flex: none; }
.hthumb { width: 1404px; height: 9px; border-radius: 5px; background: #bcbcbc; }
```
